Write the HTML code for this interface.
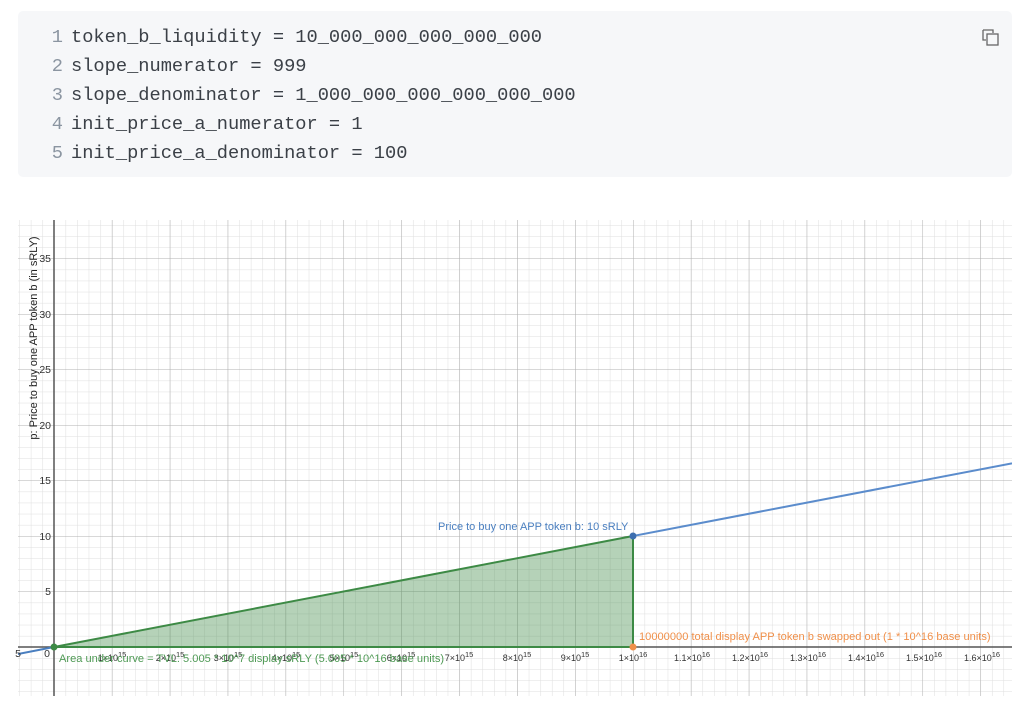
<!DOCTYPE html>
<html><head><meta charset="utf-8"><style>
body{margin:0;width:1024px;height:709px;background:#fff;overflow:hidden;position:relative;font-family:"Liberation Sans",sans-serif}
.code{position:absolute;left:18px;top:11px;width:994px;height:166px;background:#f6f7f9;border-radius:5px}
.code pre{margin:0;position:absolute;left:3px;top:12px;font-family:"Liberation Mono",monospace;font-size:18.7px;line-height:29px;color:#3b4047}
.ln{display:inline-block;width:60px;text-align:right;color:#8b95a1;padding-right:8px;margin-left:-18px}
</style></head><body>
<div class="code"><pre><span class="ln">1</span>token_b_liquidity = 10_000_000_000_000_000
<span class="ln">2</span>slope_numerator = 999
<span class="ln">3</span>slope_denominator = 1_000_000_000_000_000_000
<span class="ln">4</span>init_price_a_numerator = 1
<span class="ln">5</span>init_price_a_denominator = 100</pre>
<svg style="position:absolute;left:963px;top:17px" width="20" height="20" viewBox="0 0 20 20"><path d="M2 2h10v3M2 2v10h3" fill="none" stroke="#666" stroke-width="1.3"/><rect x="6" y="6" width="11" height="11" fill="none" stroke="#666" stroke-width="1.3"/></svg>
</div>
<svg style="position:absolute;left:0;top:0" width="1024" height="709">
<defs>
<pattern id="mi" patternUnits="userSpaceOnUse" x="54" y="647" width="11.58" height="11.1"><path d="M0 0V11.1M0 0H11.58" stroke="#dedede" stroke-width="1" fill="none"/></pattern>
<pattern id="ma" patternUnits="userSpaceOnUse" x="54" y="647" width="57.9" height="55.5"><path d="M0 0V55.5M0 0H57.9" stroke="#b0b0b0" stroke-width="1" fill="none"/></pattern>
<clipPath id="c"><rect x="18" y="220" width="994" height="476"/></clipPath>
</defs>
<g clip-path="url(#c)">
<rect x="18" y="220" width="994" height="476" fill="url(#mi)"/>
<rect x="18" y="220" width="994" height="476" fill="url(#ma)"/>
<line x1="18" y1="647" x2="1012" y2="647" stroke="#555" stroke-width="1.5"/>
<line x1="54" y1="220" x2="54" y2="696" stroke="#555" stroke-width="1.5"/>
<polygon points="54,647 633,536 633,647" fill="#3d8a45" fill-opacity="0.38" stroke="#3d8a45" stroke-width="2"/>
<line x1="18" y1="654" x2="54" y2="647" stroke="#4a7fc0" stroke-width="2"/>
<line x1="633" y1="536" x2="1012" y2="463.3" stroke="#5b8ccc" stroke-width="2"/>
</g>
<circle cx="54" cy="647" r="3.5" fill="#3d8a45"/>
<circle cx="633" cy="536" r="3.5" fill="#3d6fb0"/>
<circle cx="633" cy="647" r="3.5" fill="#f0904a"/>
<g font-size="10.5" fill="#333" text-anchor="end">
<text x="51" y="595">5</text><text x="51" y="540">10</text><text x="51" y="484">15</text><text x="51" y="429">20</text><text x="51" y="373">25</text><text x="51" y="318">30</text><text x="51" y="262">35</text><text x="50" y="657">0</text><text x="21" y="657">5</text>
</g>
<g font-size="9" fill="#333" text-anchor="middle">
<text x="112" y="661">1×10<tspan dy="-4" font-size="7.5">15</tspan></text>
<text x="170" y="661">2×10<tspan dy="-4" font-size="7.5">15</tspan></text>
<text x="228" y="661">3×10<tspan dy="-4" font-size="7.5">15</tspan></text>
<text x="286" y="661">4×10<tspan dy="-4" font-size="7.5">15</tspan></text>
<text x="344" y="661">5×10<tspan dy="-4" font-size="7.5">15</tspan></text>
<text x="401" y="661">6×10<tspan dy="-4" font-size="7.5">15</tspan></text>
<text x="459" y="661">7×10<tspan dy="-4" font-size="7.5">15</tspan></text>
<text x="517" y="661">8×10<tspan dy="-4" font-size="7.5">15</tspan></text>
<text x="575" y="661">9×10<tspan dy="-4" font-size="7.5">15</tspan></text>
<text x="633" y="661">1×10<tspan dy="-4" font-size="7.5">16</tspan></text>
<text x="692" y="661">1.1×10<tspan dy="-4" font-size="7.5">16</tspan></text>
<text x="750" y="661">1.2×10<tspan dy="-4" font-size="7.5">16</tspan></text>
<text x="808" y="661">1.3×10<tspan dy="-4" font-size="7.5">16</tspan></text>
<text x="866" y="661">1.4×10<tspan dy="-4" font-size="7.5">16</tspan></text>
<text x="924" y="661">1.5×10<tspan dy="-4" font-size="7.5">16</tspan></text>
<text x="982" y="661">1.6×10<tspan dy="-4" font-size="7.5">16</tspan></text>
</g>
<text x="37" y="338" font-size="11" fill="#222" text-anchor="middle" transform="rotate(-90 37 338)">p: Price to buy one APP token b (in sRLY)</text>
<text x="438" y="530" font-size="11" fill="#4a7fc0">Price to buy one APP token b: 10 sRLY</text>
<text x="639" y="640" font-size="11.1" fill="#f0904a">10000000 total display APP token b swapped out (1 * 10^16 base units)</text>
<text x="59" y="662" font-size="11.1" fill="#4f9a55">Area under curve = TVL: 5.005 * 10^7 display sRLY (5.005 * 10^16 base units)</text>
</svg>
</body></html>
